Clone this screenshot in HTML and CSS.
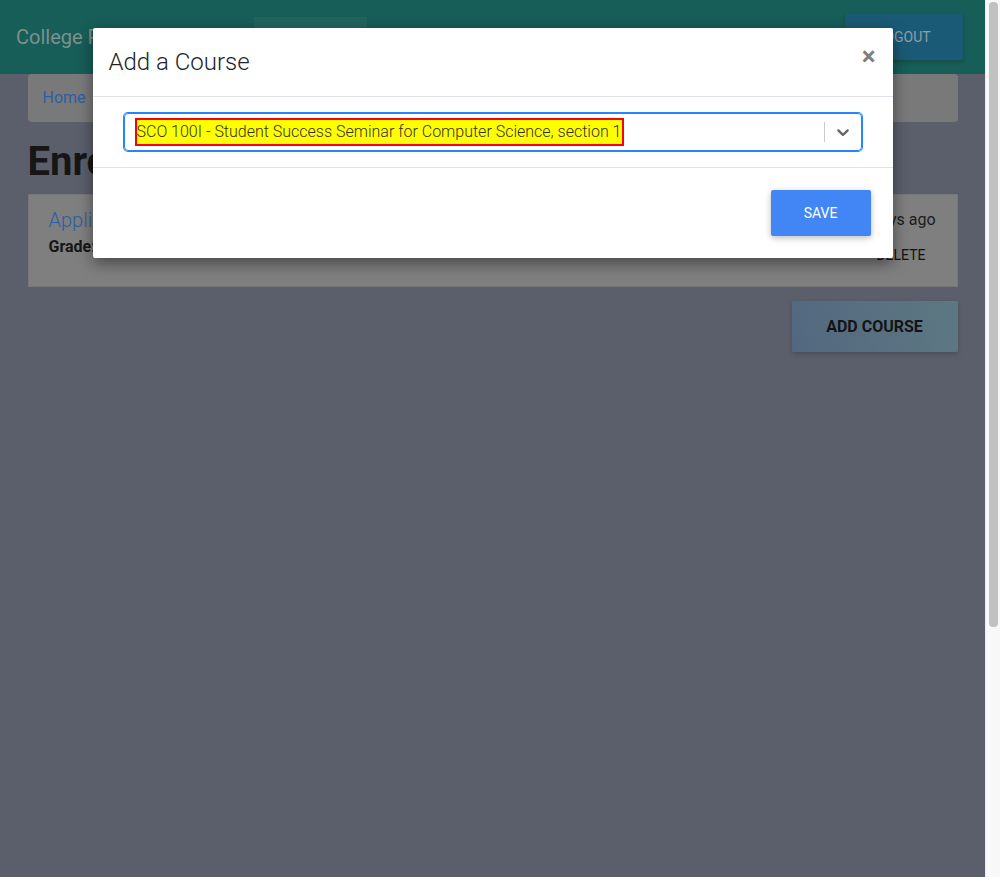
FILE: index.html
```html
<!DOCTYPE html>
<html lang="en">
<head>
<meta charset="utf-8">
<title>Enrolled Courses</title>
<link rel="stylesheet" href="styles.css">
</head>
<body>
<div class="viewport">
  <div class="page">
    <nav class="navbar">
      <div class="brand">College Planner</div>
      <div class="nav-links">
        <span class="nav-item active">Courses</span>
      </div>
      <button class="logout">Logout</button>
    </nav>
    <main class="container">
      <ol class="breadcrumb">
        <li><a class="link" href="#">Home</a></li>
        <li class="crumb-sep">/</li>
        <li>Enrolled Courses</li>
      </ol>
      <h1 class="title">Enrolled Courses</h1>
      <div class="card">
        <div class="card-left">
          <a class="course-link" href="#">Applied Programming</a>
          <div class="grade">Grade: A</div>
        </div>
        <div class="card-right">
          <div class="ago">Added 2 days ago</div>
          <button class="delete">Delete</button>
        </div>
      </div>
      <div class="actions">
        <button class="add-course">Add Course</button>
      </div>
    </main>
  </div>

  <div class="modal-layer">
    <div class="modal">
      <div class="modal-header">
        <h5 class="modal-title">Add a Course</h5>
        <button class="close" aria-label="Close">&times;</button>
      </div>
      <div class="modal-body">
        <div class="select-control">
          <div class="value-container">
            <span class="single-value">SCO 100I - Student Success Seminar for Computer Science, section 1</span>
          </div>
          <span class="indicator-sep"></span>
          <span class="indicator">
            <svg width="20" height="20" viewBox="0 0 20 20" aria-hidden="true"><path fill="#666" d="M4.516 7.548c0.436-0.446 1.043-0.481 1.576 0l3.908 3.747 3.908-3.747c0.533-0.481 1.141-0.446 1.574 0 0.436 0.445 0.408 1.197 0 1.615-0.406 0.418-4.695 4.502-4.695 4.502-0.217 0.223-0.502 0.335-0.787 0.335s-0.57-0.112-0.789-0.335c0 0-4.287-4.084-4.695-4.502s-0.436-1.170 0-1.615z"/></svg>
          </span>
        </div>
      </div>
      <div class="modal-footer">
        <button class="save">Save</button>
      </div>
    </div>
  </div>
</div>
<div class="scrollbar"><div class="thumb"></div></div>
</body>
</html>
```
FILE: styles.css
```css
html, body {
  margin: 0;
  padding: 0;
}
body {
  font-family: Roboto, "Liberation Sans", sans-serif;
  background: #5b5f6b;
  color: #161616;
  display: flex;
  height: 877px;
  overflow: hidden;
}
.viewport {
  width: 985px;
  flex: none;
  position: relative;
  overflow: hidden;
  background: #5b5f6b;
}
.scrollbar {
  width: 15px;
  flex: none;
  background: #f8f8f8;
  border-left: 1px solid #ececec;
  box-sizing: border-box;
  padding: 2px 2px 0 3px;
}
.thumb {
  height: 625px;
  background: #c1c1c1;
  border-radius: 4px;
}
.navbar {
  height: 74px;
  background: #175e58;
  display: flex;
  align-items: center;
  padding: 0 22px 0 16px;
  box-sizing: border-box;
}
.brand {
  font-size: 20px;
  color: #7f8f8b;
  width: 238px;
}
.nav-links {
  flex: 1;
  align-self: stretch;
  display: flex;
  align-items: center;
}
.nav-item {
  display: block;
  width: 113px;
  height: 40px;
  line-height: 44px;
  text-align: center;
  background: #22645e;
  color: #7f8f8b;
  font-size: 16px;
}
.logout {
  width: 118px;
  height: 46px;
  background: #1b5a76;
  border: 0;
  border-radius: 2px;
  color: #8ba0aa;
  font-family: inherit;
  font-size: 14px;
  text-transform: uppercase;
  box-shadow: 0 2px 4px rgba(0,0,0,0.2);
}
.container {
  width: 930px;
  margin: 0 auto;
}
.breadcrumb {
  list-style: none;
  margin: 0 0 16px;
  padding: 12px 15px;
  background: #797979;
  border-radius: 4px;
  display: flex;
  gap: 8px;
  font-size: 16px;
  line-height: 24px;
}
.link {
  color: #2e5ea3;
  text-decoration: none;
}
.title {
  font-size: 40px;
  font-weight: 700;
  line-height: 48px;
  margin: 0 0 8px;
  color: #161616;
}
.card {
  background: #7f7f7f;
  border: 1px solid #777;
  height: 93px;
  box-sizing: border-box;
  display: flex;
  justify-content: space-between;
  padding: 10px 21px 0 20px;
}
.course-link {
  display: block;
  color: #2e5ea3;
  font-size: 20px;
  font-weight: 300;
  text-decoration: none;
  line-height: 30px;
}
.grade {
  font-weight: 700;
  font-size: 16px;
  line-height: 24px;
  color: #161616;
}
.card-right {
  display: flex;
  flex-direction: column;
  align-items: flex-end;
}
.ago {
  font-size: 16px;
  line-height: 30px;
  color: #1c1c1c;
}
.delete {
  margin-top: 10px;
  background: none;
  border: 0;
  padding: 0 10px 0 0;
  font-family: inherit;
  font-size: 14px;
  text-transform: uppercase;
  color: #111;
  line-height: 20px;
}
.actions {
  display: flex;
  justify-content: flex-end;
  margin-top: 14px;
}
.add-course {
  width: 166px;
  height: 51px;
  border: 0;
  border-radius: 2px;
  background: linear-gradient(75deg, #536880, #5d7882);
  font-family: inherit;
  font-weight: 700;
  font-size: 16px;
  color: #141414;
  text-transform: uppercase;
  box-shadow: 0 2px 5px rgba(0,0,0,0.2);
}

/* modal overlay */
.modal-layer {
  position: absolute;
  top: 0;
  left: 0;
  right: 0;
  bottom: 0;
  display: flex;
  justify-content: center;
  align-items: flex-start;
}
.modal {
  width: 800px;
  margin-top: 28px;
  background: #fff;
  border-radius: 2px;
  box-shadow: 0 5px 15px rgba(0,0,0,0.45);
}
.modal-header {
  display: flex;
  align-items: flex-start;
  justify-content: space-between;
  padding: 16px;
  border-bottom: 1px solid #dee2e6;
}
.modal-title {
  margin: 0;
  font-size: 24px;
  font-weight: 300;
  line-height: 36px;
  color: #212529;
}
.close {
  background: none;
  border: 0;
  padding: 0;
  margin: -6px 1px 0 0;
  font-family: Roboto, sans-serif;
  font-size: 26px;
  font-weight: 700;
  line-height: 36px;
  color: #000;
  opacity: 0.5;
}
.modal-body {
  padding: 16px 31px;
}
.select-control {
  height: 38px;
  box-sizing: border-box;
  border: 1px solid #2684ff;
  box-shadow: 0 0 0 1px #2684ff;
  border-radius: 4px;
  display: flex;
  align-items: center;
}
.value-container {
  flex: 1;
  padding: 0 8px 1px;
  display: flex;
  align-items: center;
}
.single-value {
  margin-left: 2px;
  border: 2px solid #ff0000;
  background: #ffff00;
  color: #333;
  font-size: 16px;
  font-weight: 300;
  line-height: 24px;
  padding: 0 1px 0 0;
}
.indicator-sep {
  align-self: stretch;
  width: 1px;
  margin: 8px 0;
  background: #ccc;
}
.indicator {
  display: flex;
  padding: 8px;
}
.indicator svg {
  display: block;
}
.modal-footer {
  display: flex;
  justify-content: flex-end;
  padding: 12px;
  border-top: 1px solid #dee2e6;
}
.save {
  margin: 10px;
  width: 100px;
  height: 46px;
  border: 0;
  border-radius: 2px;
  background: #4285f4;
  color: #fff;
  font-family: inherit;
  font-size: 14px;
  text-transform: uppercase;
  box-shadow: 0 2px 5px rgba(0,0,0,0.16), 0 2px 10px rgba(0,0,0,0.12);
}
```
